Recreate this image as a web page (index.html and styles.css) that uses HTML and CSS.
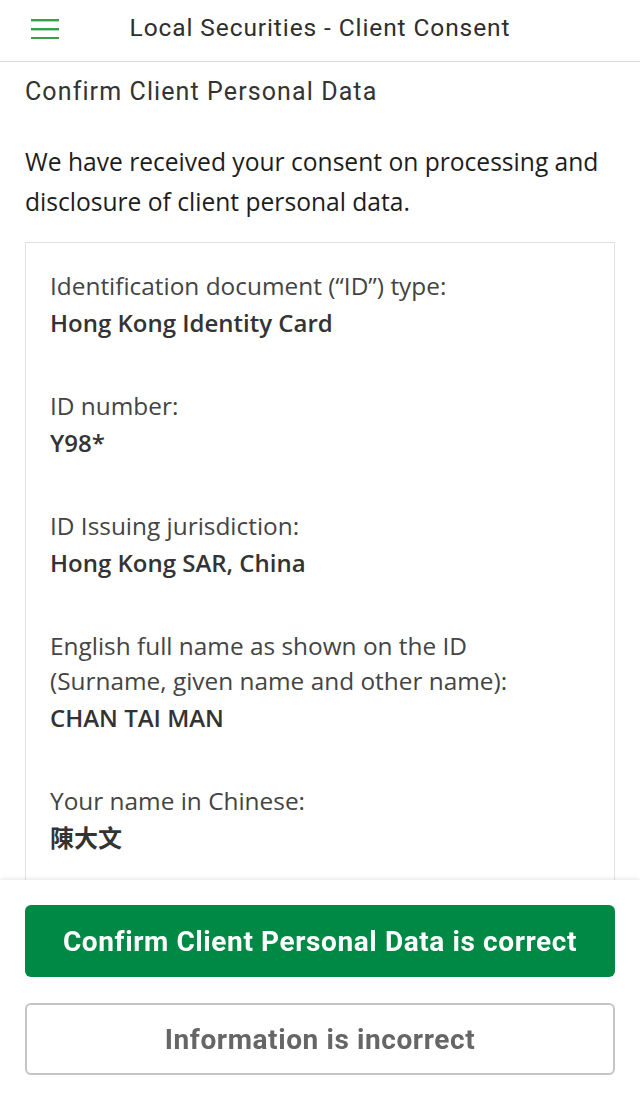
FILE: index.html
```html
<!DOCTYPE html>
<html lang="en">
<head>
    <meta charset="UTF-8">
    <meta name="viewport" content="width=device-width, initial-scale=1.0">
    <title>Local Securities - Client Consent</title>
    <link rel="stylesheet" href="styles.css">
</head>
<body>
    <header class="top-bar">
        <button class="menu-btn" aria-label="Menu">
            <svg width="28" height="20" viewBox="0 0 28 20">
                <rect x="0" y="0" width="28" height="2.4" fill="#3a9f48"/>
                <rect x="0" y="9" width="28" height="2.4" fill="#3a9f48"/>
                <rect x="0" y="18" width="28" height="2.4" fill="#3a9f48"/>
            </svg>
        </button>
        <h1 class="top-title">Local Securities - Client Consent</h1>
    </header>

    <main class="content">
        <h2 class="page-title">Confirm Client Personal Data</h2>
        <p class="intro">We have received your consent on processing and disclosure of client personal data.</p>

        <div class="data-card">
            <div class="field">
                <div class="label">Identification document (“ID”) type:</div>
                <div class="value">Hong Kong Identity Card</div>
            </div>
            <div class="field">
                <div class="label">ID number:</div>
                <div class="value">Y98*</div>
            </div>
            <div class="field">
                <div class="label">ID Issuing jurisdiction:</div>
                <div class="value">Hong Kong SAR, China</div>
            </div>
            <div class="field">
                <div class="label">English full name as shown on the ID<br>(Surname, given name and other name):</div>
                <div class="value">CHAN TAI MAN</div>
            </div>
            <div class="field">
                <div class="label">Your name in Chinese:</div>
                <div class="value">陳大文</div>
            </div>
        </div>
    </main>

    <footer class="actions">
        <button class="btn btn-primary">Confirm Client Personal Data is correct</button>
        <button class="btn btn-outline">Information is incorrect</button>
    </footer>
</body>
</html>
```

FILE: styles.css
```css
body {
    margin: 0;
    padding: 0;
    background-color: #fff;
    font-family: "Open Sans", "Noto Sans CJK TC", sans-serif;
    color: #222;
}

.top-bar {
    height: 61px;
    border-bottom: 1px solid #dadada;
    display: flex;
    align-items: center;
    position: relative;
}

.menu-btn {
    border: none;
    background: none;
    padding: 0;
    margin-left: 31px;
    margin-top: -4px;
    display: flex;
}

.top-title {
    position: absolute;
    left: 0;
    right: 0;
    top: 0;
    margin: 0;
    line-height: 56px;
    text-align: center;
    font-family: Roboto, sans-serif;
    font-weight: 400;
    font-size: 24.5px;
    letter-spacing: 0.9px;
    color: #2e2e2e;
    pointer-events: none;
}

.content {
    padding: 0 25px;
}

.page-title {
    margin: 0;
    padding-top: 12px;
    font-family: Roboto, sans-serif;
    font-weight: 400;
    font-size: 25px;
    line-height: 36px;
    letter-spacing: 1.1px;
    color: #333;
}

.intro {
    margin: 32px 0 20px;
    font-size: 24.6px;
    line-height: 40px;
    color: #1d1d1d;
}

.data-card {
    border: 1px solid #e2e2e2;
    padding: 25px 24px 26px;
    display: flex;
    flex-direction: column;
    gap: 48px;
}

.label {
    font-size: 24.4px;
    line-height: 35px;
    color: #444;
}

.value {
    margin-top: 2px;
    font-size: 24px;
    line-height: 35px;
    font-weight: 600;
    color: #333;
}

.actions {
    position: fixed;
    left: 0;
    right: 0;
    bottom: 0;
    height: 220px;
    box-sizing: border-box;
    background-color: #fff;
    box-shadow: 0 -1px 5px rgba(0, 0, 0, 0.1);
    padding: 25px 25px 0;
    display: flex;
    flex-direction: column;
    gap: 26px;
}

.btn {
    height: 72px;
    width: 100%;
    border-radius: 6px;
    font-family: Roboto, sans-serif;
    font-weight: 700;
    font-size: 28px;
    letter-spacing: 0.6px;
    cursor: pointer;
}

.btn-primary {
    background-color: #008945;
    border: none;
    color: #fff;
}

.btn-outline {
    background-color: #fff;
    border: 2px solid #c4c4c4;
    color: #666;
}
```
